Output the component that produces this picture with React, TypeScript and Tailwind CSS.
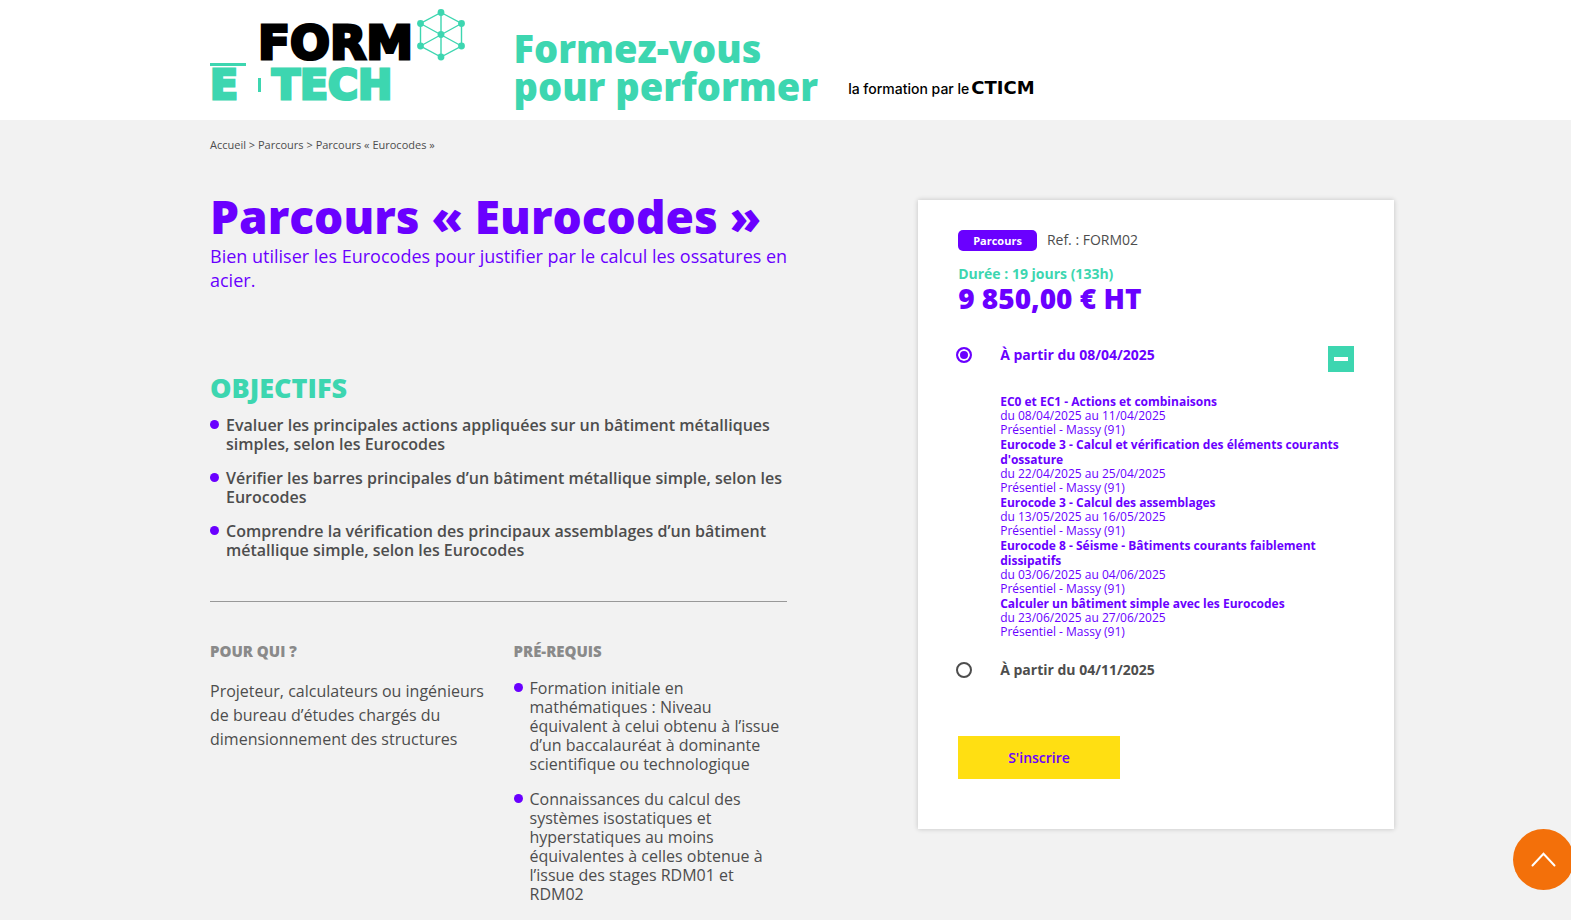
import { useState } from "react";

const objectives = [
  "Evaluer les principales actions appliquées sur un bâtiment métalliques simples, selon les Eurocodes",
  "Vérifier les barres principales d’un bâtiment métallique simple, selon les Eurocodes",
  "Comprendre la vérification des principaux assemblages d’un bâtiment métallique simple, selon les Eurocodes",
];

const prerequisites = [
  "Formation initiale en mathématiques : Niveau équivalent à celui obtenu à l’issue d’un baccalauréat à dominante scientifique ou technologique",
  "Connaissances du calcul des systèmes isostatiques et hyperstatiques au moins équivalentes à celles obtenue à l’issue des stages RDM01 et RDM02",
];

const modules = [
  { title: "EC0 et EC1 - Actions et combinaisons", dates: "du 08/04/2025 au 11/04/2025" },
  { title: "Eurocode 3 - Calcul et vérification des éléments courants d'ossature", dates: "du 22/04/2025 au 25/04/2025" },
  { title: "Eurocode 3 - Calcul des assemblages", dates: "du 13/05/2025 au 16/05/2025" },
  { title: "Eurocode 8 - Séisme - Bâtiments courants faiblement dissipatifs", dates: "du 03/06/2025 au 04/06/2025" },
  { title: "Calculer un bâtiment simple avec les Eurocodes", dates: "du 23/06/2025 au 27/06/2025" },
];

function Logo() {
  return (
    <svg viewBox="0 0 256 94" className="h-[94px] w-[256px] overflow-visible" role="img" aria-label="Form e-tech">
      <g fontFamily="'DejaVu Sans', sans-serif" fontWeight="700" strokeWidth="3">
        <text x="203" y="51" fontSize="47" fill="#000" stroke="#000" textAnchor="end">FORM</text>
        <g fill="#3dd6b0" stroke="#3dd6b0" fontSize="41">
          <text x="0" y="91">E</text>
          <text x="62" y="91">TECH</text>
        </g>
      </g>
      <g fill="#3dd6b0">
        <rect x="0" y="55" width="36" height="3" />
        <rect x="48" y="70" width="3" height="14" />
      </g>
      <g stroke="#3dd6b0" strokeWidth="1.4" fill="none">
        <path d="M231 4.500 251.500 15.500V38L231 49 210.500 38V15.500Z" />
        <path d="M231 4.500V49M210.500 15.500 251.500 38M251.500 15.500 210.500 38" />
      </g>
      <g fill="#3dd6b0">
        <circle cx="231" cy="4.500" r="3.400" />
        <circle cx="251.500" cy="15.500" r="3.400" />
        <circle cx="251.500" cy="38" r="3.400" />
        <circle cx="231" cy="49" r="3.400" />
        <circle cx="210.500" cy="38" r="3.400" />
        <circle cx="210.500" cy="15.500" r="3.400" />
        <circle cx="231" cy="26.500" r="3.400" />
      </g>
    </svg>
  );
}

function BulletList({ items, strong }: { items: string[]; strong?: boolean }) {
  return (
    <ul className={strong ? "space-y-[15px] font-semibold" : "space-y-4"}>
      {items.map((item) => (
        <li key={item} className="flex gap-[7px] leading-[19px]">
          <span className="mt-1 size-[9px] shrink-0 rounded-full bg-[#6a00ff]" />
          <span>{item}</span>
        </li>
      ))}
    </ul>
  );
}

const radioClass =
  "size-4 shrink-0 appearance-none rounded-full border-2 border-[#4d4d4d] checked:border-[#6a00ff] checked:bg-[#6a00ff] checked:shadow-[inset_0_0_0_2px_#fff]";

export default function App() {
  const [session, setSession] = useState("avril");
  const [open, setOpen] = useState(true);

  return (
    <div className="min-h-screen overflow-x-hidden bg-[#f2f2f2] font-['Open_Sans',sans-serif] text-base text-[#4d4d4d]">
      <header className="bg-white pr-[177px] pl-[210px]">
        <div className="grid h-[120px] grid-cols-4 gap-x-[30px]">
          <a href="#accueil" className="pt-2">
            <Logo />
          </a>
          <div className="col-span-3 flex items-end gap-[30px] pb-[15px]">
            <p className="text-[38px] leading-[38px] font-extrabold whitespace-nowrap text-[#3dd6b0]">
              Formez-vous
              <br />
              pour performer
            </p>
            <p className="flex items-baseline gap-[2px] pb-[6px] font-['Inter',sans-serif] text-sm leading-5 font-medium whitespace-nowrap text-black">
              la formation par le
              <strong className="font-['DejaVu_Sans',sans-serif] text-lg leading-5 font-bold">CTICM</strong>
            </p>
          </div>
        </div>
      </header>

      <main className="pr-[177px] pl-[210px]">
        <nav aria-label="Fil d'Ariane" className="pt-4 text-[11px] leading-[18px]">
          <a href="#accueil">Accueil</a> &gt; <a href="#parcours">Parcours</a> &gt; <span>Parcours « Eurocodes »</span>
        </nav>

        <div className="grid grid-cols-12 items-start gap-x-[30px] pt-[38px]">
          <div className="col-span-6">
            <h1 className="mb-1 text-[46px] leading-[48px] font-extrabold whitespace-nowrap text-[#6a00ff]">Parcours « Eurocodes »</h1>
            <p className="-mr-2 text-lg leading-6 text-[#6a00ff]">
              Bien utiliser les Eurocodes pour justifier par le calcul les ossatures en acier.
            </p>

            <section className="mt-20 border-b border-[#999] pb-[41px]">
              <h2 className="mb-3 text-[27px] leading-8 font-extrabold text-[#3dd6b0]">OBJECTIFS</h2>
              <BulletList items={objectives} strong />
            </section>

            <div className="grid grid-cols-2 gap-x-[30px] pt-[37px] pb-10">
              <section>
                <h3 className="mb-4 text-[15px] leading-6 font-extrabold text-[#8a8a8a]">POUR QUI ?</h3>
                <p className="-mr-2 leading-6">Projeteur, calculateurs ou ingénieurs de bureau d’études chargés du dimensionnement des structures</p>
              </section>
              <section>
                <h3 className="mb-4 text-[15px] leading-6 font-extrabold text-[#8a8a8a]">PRÉ-REQUIS</h3>
                <BulletList items={prerequisites} />
              </section>
            </div>
          </div>

          <aside className="col-span-5 col-start-8 mt-2 bg-white px-10 pt-[30px] pb-[50px] shadow-[0_0_5px_rgba(0,0,0,0.2)]">
            <div className="flex items-start gap-[10px]">
              <span className="rounded-[5px] bg-[#6a00ff] px-[15px] text-[11px] leading-[21px] font-bold text-white">Parcours</span>
              <span className="text-sm leading-5">Ref. : FORM02</span>
            </div>
            <p className="mt-[13px] text-sm leading-[19px] font-bold text-[#3dd6b0]">Durée : 19 jours (133h)</p>
            <p className="text-[28px] leading-[30px] font-extrabold text-[#6a00ff]">9 850,00 € HT</p>

            <fieldset className="mt-[33px]" aria-label="Sessions">
              <div className="-ml-[2px] flex items-start">
                <input
                  id="session-avril"
                  type="radio"
                  name="session"
                  className={`mt-px ${radioClass}`}
                  checked={session === "avril"}
                  onChange={() => setSession("avril")}
                />
                <label htmlFor="session-avril" className="ml-7 flex-1 text-sm leading-[18px] font-bold text-[#6a00ff]">
                  À partir du 08/04/2025
                </label>
                <button
                  type="button"
                  aria-label="Détail des modules"
                  aria-expanded={open}
                  onClick={() => setOpen(!open)}
                  className="flex size-[26px] items-center justify-center bg-[#3dd6b0]"
                >
                  <span className="h-1 w-[14px] bg-white" />
                </button>
              </div>
              {open && (
                <ul className="mt-[22px] pl-[42px] text-xs text-[#6a00ff]">
                  {modules.map((m) => (
                    <li key={m.title}>
                      <p className="leading-[15px] font-bold">{m.title}</p>
                      <p className="leading-[14px]">{m.dates}</p>
                      <p className="leading-[14px]">Présentiel - Massy (91)</p>
                    </li>
                  ))}
                </ul>
              )}
              <div className="mt-[22px] -ml-[2px] flex items-center">
                <input
                  id="session-novembre"
                  type="radio"
                  name="session"
                  className={radioClass}
                  checked={session === "novembre"}
                  onChange={() => setSession("novembre")}
                />
                <label htmlFor="session-novembre" className="ml-7 text-sm leading-[18px] font-bold">
                  À partir du 04/11/2025
                </label>
              </div>
            </fieldset>

            <button type="button" className="mt-[57px] h-[43px] bg-[#ffdf12] px-[50px] text-sm font-semibold text-[#6a00ff]">
              S'inscrire
            </button>
          </aside>
        </div>
      </main>

      <a
        href="#haut"
        aria-label="Haut de page"
        className="fixed -right-[3px] bottom-[30px] flex size-[61px] items-center justify-center rounded-full bg-[#f3700a]"
      >
        <svg viewBox="0 0 25 15" className="h-[15px] w-[25px]" fill="none" stroke="#fff" strokeWidth="2" strokeLinecap="round">
          <path d="M1.500 13.500 12.500 1.800 23.500 13.500" />
        </svg>
      </a>
    </div>
  );
}
